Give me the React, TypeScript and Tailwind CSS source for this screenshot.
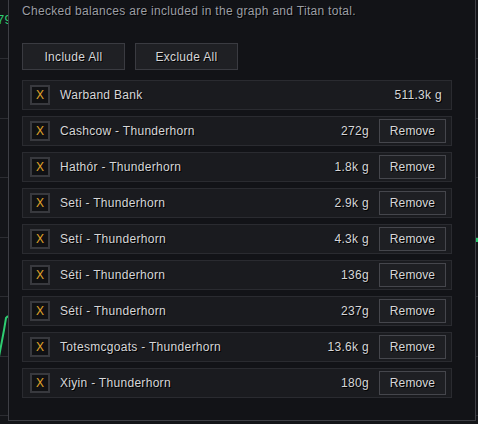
const ROWS = [
  { name: 'Cashcow - Thunderhorn', amount: '272g' },
  { name: 'Hathór - Thunderhorn', amount: '1.8k g' },
  { name: 'Seti - Thunderhorn', amount: '2.9k g' },
  { name: 'Setí - Thunderhorn', amount: '4.3k g' },
  { name: 'Séti - Thunderhorn', amount: '136g' },
  { name: 'Sétí - Thunderhorn', amount: '237g' },
  { name: 'Totesmcgoats - Thunderhorn', amount: '13.6k g' },
  { name: 'Xiyin - Thunderhorn', amount: '180g' },
];

const shadow = '[text-shadow:1px_1px_0_#000]';

function Check() {
  return (
    <div className="w-[20px] h-[20px] shrink-0 border-2 border-[#38393e] bg-[#101114] flex items-center justify-center text-[12px] leading-none tracking-normal text-[#e0a629]">
      X
    </div>
  );
}

function Row({ name, amount, removable }: { name: string; amount: string; removable: boolean }) {
  return (
    <div className="h-[30px] flex items-center border border-[#2a2b30] bg-[#1a1b1f] pl-[7px] pr-[5px]">
      <Check />
      <span className={`ml-[10px] flex-1 text-[#d6d6d8] ${shadow}`}>{name}</span>
      <span className={`text-[#d6d6d8] ${shadow} ${removable ? '' : 'mr-[4px]'}`}>{amount}</span>
      {removable && (
        <button className={`ml-[10px] w-[67px] h-[24px] border border-[#45464c] bg-[#1e1f23] text-[#d6d6d8] tracking-[0.1px] ${shadow}`}>
          Remove
        </button>
      )}
    </div>
  );
}

export default function App() {
  return (
    <div
      className="relative w-[478px] h-[424px] overflow-hidden bg-[#141519] text-[12px] leading-[16px] tracking-[0.3px]"
      style={{ fontFamily: '"Liberation Sans", Arial, sans-serif' }}
    >
      {/* chart behind the dialog */}
      <div className="absolute inset-0 flex flex-col pt-[58px]">
        {[0, 1, 2, 3, 4, 5, 6].map((i) => (
          <div key={i} className="h-[59.5px] shrink-0 border-t border-[#2c2d32]" />
        ))}
      </div>
      <span className="absolute left-[-3px] top-[12px] text-[13px] text-[#2ecc71]">79</span>
      <svg className="absolute left-0 top-0" width="478" height="424">
        <polyline points="-2,362 4,330 6,318 8,316" fill="none" stroke="#2ecc71" strokeWidth="2" />
        <rect x="476" y="238" width="2" height="4" fill="#2ecc71" />
      </svg>

      {/* dialog */}
      <div className="absolute left-[8px] top-[-10px] w-[468px] h-[431px] border border-[#3e3f45] bg-[#121317] pt-[12px] pl-[13px] pr-[23px]">
        <p className={`text-[#9c9ea5] ${shadow}`}>Checked balances are included in the graph and Titan total.</p>
        <div className="flex gap-[10px] mt-[24px]">
          <button className={`w-[103px] h-[27px] border border-[#3a3b41] bg-[#1f2024] text-[#d6d6d8] ${shadow}`}>
            Include All
          </button>
          <button className={`w-[103px] h-[27px] border border-[#3a3b41] bg-[#1f2024] text-[#d6d6d8] ${shadow}`}>
            Exclude All
          </button>
        </div>
        <div className="flex flex-col gap-[6px] mt-[10px]">
          <Row name="Warband Bank" amount="511.3k g" removable={false} />
          {ROWS.map((r) => (
            <Row key={r.name} name={r.name} amount={r.amount} removable />
          ))}
        </div>
      </div>
    </div>
  );
}
